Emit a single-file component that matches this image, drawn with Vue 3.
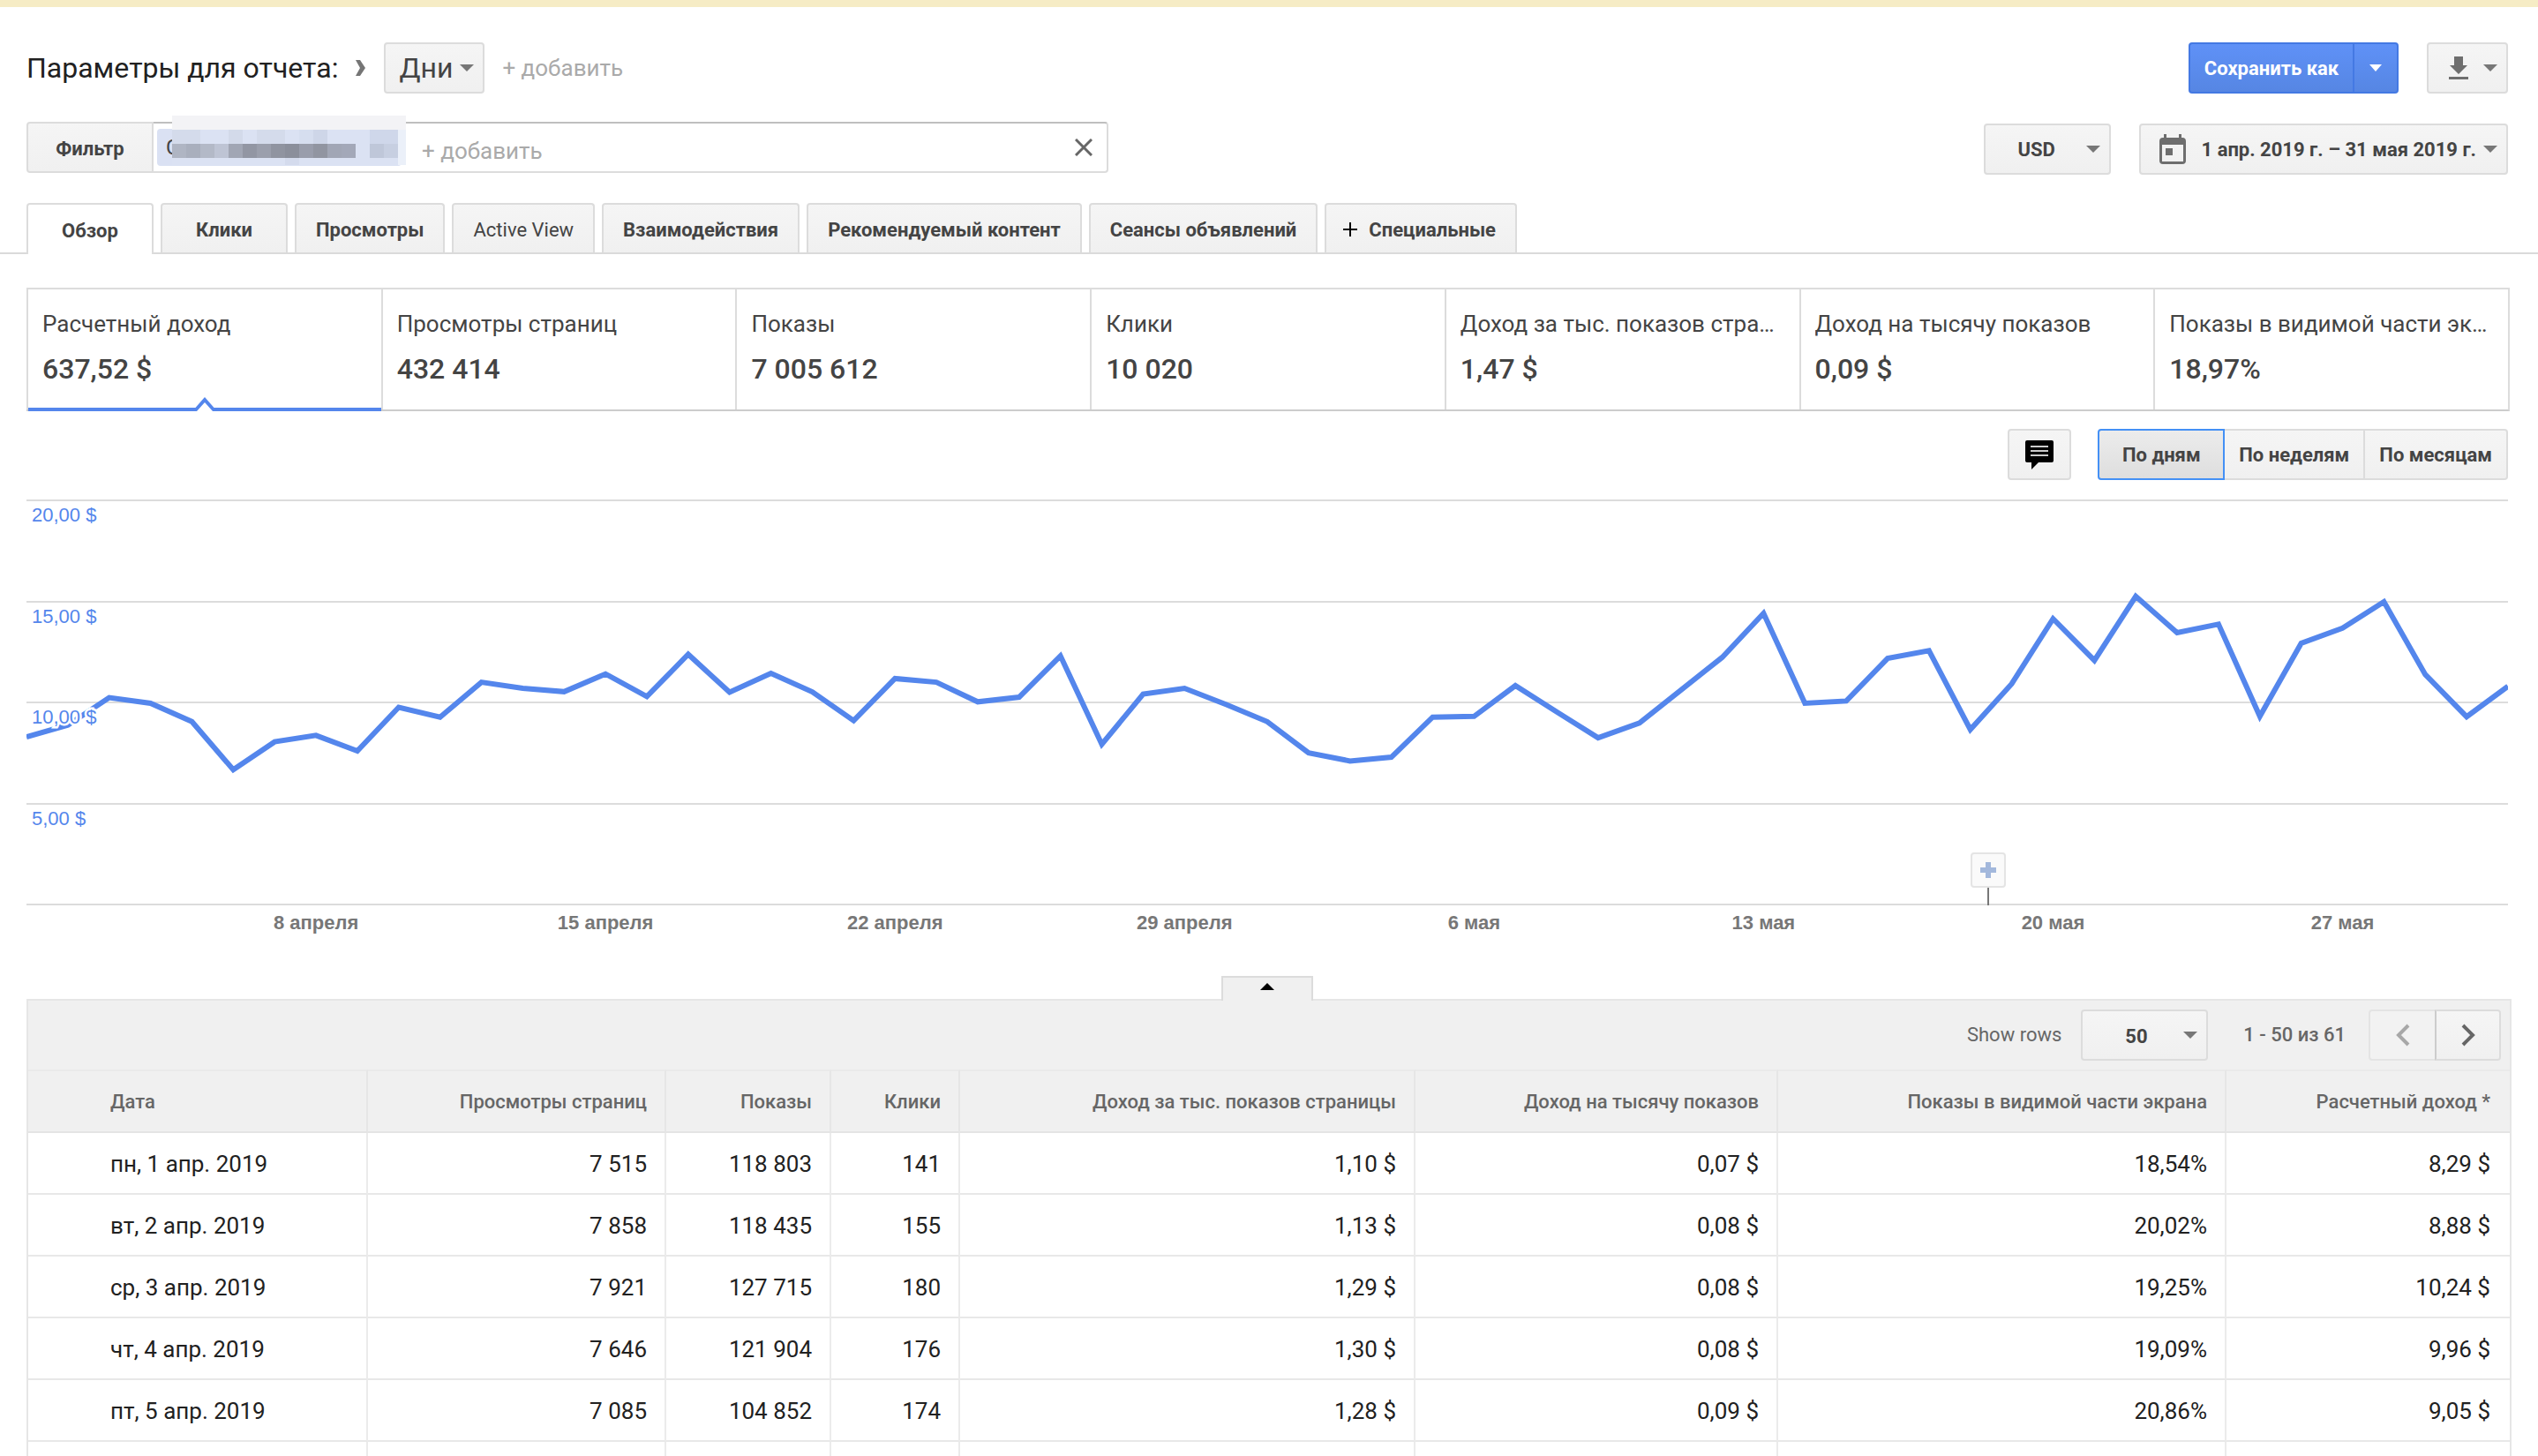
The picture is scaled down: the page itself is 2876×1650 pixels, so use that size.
<script setup>
import { ref, computed } from 'vue'

const tabs = [
  { label: 'Обзор' },
  { label: 'Клики' },
  { label: 'Просмотры' },
  { label: 'Active View', plain: true },
  { label: 'Взаимодействия' },
  { label: 'Рекомендуемый контент' },
  { label: 'Сеансы объявлений' },
  { label: 'Специальные', plus: true }
]
const activeTab = ref('Обзор')

const metrics = [
  { label: 'Расчетный доход', value: '637,52 $' },
  { label: 'Просмотры страниц', value: '432 414' },
  { label: 'Показы', value: '7 005 612' },
  { label: 'Клики', value: '10 020' },
  { label: 'Доход за тыс. показов страницы', value: '1,47 $' },
  { label: 'Доход на тысячу показов', value: '0,09 $' },
  { label: 'Показы в видимой части экрана', value: '18,97%' }
]
const activeMetric = ref('Расчетный доход')

const periods = ['По дням', 'По неделям', 'По месяцам']
const activePeriod = ref('По дням')

// estimated earnings per day, April 1 - May 31
const earnings = [
  8.29, 8.88, 10.24, 9.96, 9.05, 6.67, 8.05, 8.37, 7.6, 9.76,
  9.27, 11, 10.7, 10.53, 11.41, 10.29, 12.38, 10.5, 11.44, 10.52,
  9.1, 11.18, 11, 10.03, 10.26, 12.3, 7.93, 10.41, 10.7, 9.9,
  9.05, 7.5, 7.1, 7.29, 9.27, 9.31, 10.83, 9.53, 8.25, 8.98,
  10.61, 12.23, 14.41, 9.96, 10.07, 12.18, 12.56, 8.66, 10.92, 14.14,
  12.08, 15.25, 13.45, 13.87, 9.31, 12.93, 13.68, 14.98, 11.38, 9.29, 10.8
]
const linePoints = computed(() => earnings.map((v, i) => `${i},${(20 - v).toFixed(2)}`).join(' '))

const yLabels = ['20,00 $', '15,00 $', '10,00 $', '5,00 $']
const xLabels = ['8 апреля', '15 апреля', '22 апреля', '29 апреля', '6 мая', '13 мая', '20 мая', '27 мая']
const dayLeft = (day) => ({ left: (day / 60) * 100 + '%' })

const columns = [
  'Дата', 'Просмотры страниц', 'Показы', 'Клики', 'Доход за тыс. показов страницы',
  'Доход на тысячу показов', 'Показы в видимой части экрана', 'Расчетный доход *'
]
const rows = [
  ['пн, 1 апр. 2019', '7 515', '118 803', '141', '1,10 $', '0,07 $', '18,54%', '8,29 $'],
  ['вт, 2 апр. 2019', '7 858', '118 435', '155', '1,13 $', '0,08 $', '20,02%', '8,88 $'],
  ['ср, 3 апр. 2019', '7 921', '127 715', '180', '1,29 $', '0,08 $', '19,25%', '10,24 $'],
  ['чт, 4 апр. 2019', '7 646', '121 904', '176', '1,30 $', '0,08 $', '19,09%', '9,96 $'],
  ['пт, 5 апр. 2019', '7 085', '104 852', '174', '1,28 $', '0,09 $', '20,86%', '9,05 $']
]

// pixelated site name: one colour per 16px cell
const maskTop = ['#d4dbeb', '#d4dbeb', '#dbe2f3', '#dbe2f3', '#d3daea', '#dbe2f3', '#d4dbeb', '#d4dbeb', '#dbe2f3', '#d6deef', '#ced6e8', '#dbe2f3', '#dbe2f3', '#dbe2f3', '#cfd7ea', '#cfd7ea']
const maskMid = ['#afb5c3', '#a9afbd', '#b3b9c7', '#bec4d4', '#a1a6b4', '#9296a3', '#9b9fac', '#9094a0', '#8b8f9b', '#999dab', '#9195a1', '#a1a6b5', '#a3a8b8', '#dbe2f3', '#bfc7d9', '#c7cfe1']
</script>

<template>
  <div class="report">
    <div class="notice-bar"></div>

    <header class="head">
      <div class="row">
        <div class="params">
          <label class="title" for="dimension">Параметры для отчета:</label>
          <svg class="crumb" width="12" height="20" viewBox="0 0 12 20"><path d="M0 1h5l6 9-6 9H0l5-9z" fill="#757575" /></svg>
          <div class="select dimension">
            <select id="dimension"><option>Дни</option></select>
            <svg class="caret" width="16" height="8" viewBox="0 0 16 8"><path d="M0 0h16L8 8z" /></svg>
          </div>
          <button class="add">+ добавить</button>
        </div>
        <div class="actions">
          <div class="save">
            <button class="save-main">Сохранить как</button>
            <button class="save-more" aria-label="Другие варианты">
              <svg width="14" height="8" viewBox="0 0 14 8"><path d="M0 0h14L7 8z" fill="#fff" /></svg>
            </button>
          </div>
          <button class="btn download" aria-label="Скачать">
            <svg width="22" height="26" viewBox="0 0 22 26"><path d="M6 0h10v10h5L11 20 1 10h5zM0 23h22v3H0z" fill="#6e6e6e" /></svg>
            <svg class="caret" width="16" height="8" viewBox="0 0 16 8"><path d="M0 0h16L8 8z" /></svg>
          </button>
        </div>
      </div>

      <div class="row second">
        <div class="filter">
          <label class="filter-label" for="filter">Фильтр</label>
          <div class="filter-box">
            <span class="chip">С
              <svg class="mask" width="265" height="56" viewBox="0 0 265 56" shape-rendering="crispEdges">
                <rect width="265" height="16" fill="#f3f3f6" />
                <rect y="16" width="256" height="40" fill="#dbe2f3" />
                <rect x="256" y="16" width="9" height="40" fill="#ebf0f9" />
                <rect v-for="(c, i) in maskTop" :key="'t' + i" :x="i * 16" y="16" width="16" height="16" :fill="c" />
                <rect v-for="(c, i) in maskMid" :key="'m' + i" :x="i * 16" y="32" width="16" height="16" :fill="c" />
                <rect x="128" y="48" width="16" height="8" fill="#d4dbed" />
              </svg>
            </span>
            <input id="filter" type="text" placeholder="+ добавить" />
            <button class="clear" aria-label="Очистить">
              <svg width="20" height="20" viewBox="0 0 20 20"><path d="M1 1l18 18M19 1L1 19" stroke="#666" stroke-width="3" /></svg>
            </button>
          </div>
        </div>
        <div class="actions">
          <div class="select currency">
            <select aria-label="Валюта"><option>USD</option></select>
            <svg class="caret" width="16" height="8" viewBox="0 0 16 8"><path d="M0 0h16L8 8z" /></svg>
          </div>
          <button class="btn dates">
            <svg width="30" height="34" viewBox="0 0 30 34">
              <path fill-rule="evenodd" fill="#6e6e6e" d="M5 0h3v4h14V0h3v4h1q4 0 4 4v22q0 4-4 4H4q-4 0-4-4V8q0-4 4-4h1zM3 12v19h24V12zM7 16h8v8H7z" />
            </svg>
            <span>1 апр. 2019 г. – 31 мая 2019 г.</span>
            <svg class="caret" width="16" height="8" viewBox="0 0 16 8"><path d="M0 0h16L8 8z" /></svg>
          </button>
        </div>
      </div>
    </header>

    <nav class="tabs">
      <button
        v-for="tab in tabs" :key="tab.label" class="tab"
        :class="{ active: activeTab === tab.label, plain: tab.plain, plus: tab.plus }"
        @click="activeTab = tab.label"
      >
        <svg v-if="tab.plus" width="18" height="18" viewBox="0 0 18 18"><path d="M9 1v16M1 9h16" stroke="#000" stroke-width="2" /></svg>
        {{ tab.label }}
      </button>
    </nav>

    <section class="metrics">
      <button
        v-for="m in metrics" :key="m.label" class="metric"
        :class="{ active: activeMetric === m.label }" @click="activeMetric = m.label"
      >
        <span class="metric-label">{{ m.label }}</span>
        <span class="metric-value">{{ m.value }}</span>
        <svg v-if="activeMetric === m.label" class="notch" width="28" height="16" viewBox="0 0 28 16">
          <path d="M0 16L14 0l14 16z" fill="#5486ec" /><path d="M5 16l9-10 9 10z" fill="#fff" />
        </svg>
      </button>
    </section>

    <div class="chart-tools">
      <button class="btn note" aria-label="Примечания">
        <svg width="34" height="34" viewBox="0 0 34 34">
          <path d="M3 1h28q2 0 2 2v21q0 2-2 2H16l-8 8v-8H3q-2 0-2-2V3q0-2 2-2z" fill="#000" />
          <path d="M7 8h20M7 13h20M7 18h20" stroke="#ccc" stroke-width="2" />
        </svg>
      </button>
      <div class="segments">
        <button
          v-for="p in periods" :key="p" class="segment"
          :class="{ active: activePeriod === p }" @click="activePeriod = p"
        >{{ p }}</button>
      </div>
    </div>

    <section class="chart">
      <div class="plot">
        <svg class="line" viewBox="0 0 60 20" preserveAspectRatio="none">
          <polyline :points="linePoints" vector-effect="non-scaling-stroke" />
        </svg>
        <div v-for="y in yLabels" :key="y" class="band"><span>{{ y }}</span></div>
        <div class="marker" :style="dayLeft(47.43)">
          <button aria-label="Добавить примечание">
            <svg width="18" height="18" viewBox="0 0 18 18"><path d="M6 0h6v6h6v6h-6v6H6v-6H0V6h6z" fill="#a3b8dc" /></svg>
          </button>
        </div>
      </div>
      <div class="x-axis">
        <span v-for="(x, i) in xLabels" :key="x" :style="dayLeft(7 + i * 7)">{{ x }}</span>
      </div>
    </section>

    <section class="data">
      <button class="collapse" aria-label="Свернуть график">
        <svg width="16" height="8" viewBox="0 0 16 8"><path d="M8 0l8 8H0z" /></svg>
      </button>
      <div class="pager">
        <label for="rows">Show rows</label>
        <div class="select page-size">
          <select id="rows"><option>50</option></select>
          <svg class="caret" width="16" height="8" viewBox="0 0 16 8"><path d="M0 0h16L8 8z" /></svg>
        </div>
        <span class="range">1 - 50 из 61</span>
        <div class="pages">
          <button class="btn prev" aria-label="Назад" disabled>
            <svg width="18" height="26" viewBox="0 0 18 26"><path d="M15 2L4 13l11 11" fill="none" stroke="#a8a8a8" stroke-width="4" /></svg>
          </button>
          <button class="btn next" aria-label="Вперед">
            <svg width="18" height="26" viewBox="0 0 18 26"><path d="M3 2l11 11L3 24" fill="none" stroke="#666" stroke-width="4" /></svg>
          </button>
        </div>
      </div>
      <table>
        <colgroup>
          <col class="c-date" /><col class="c-views" /><col class="c-shows" /><col class="c-clicks" />
          <col class="c-rpm" /><col class="c-cpm" /><col class="c-visible" /><col class="c-income" />
        </colgroup>
        <thead>
          <tr><th v-for="c in columns" :key="c" scope="col">{{ c }}</th></tr>
        </thead>
        <tbody>
          <tr v-for="r in rows" :key="r[0]"><td v-for="(cell, i) in r" :key="i">{{ cell }}</td></tr>
          <tr><td v-for="c in columns" :key="c"></td></tr>
        </tbody>
      </table>
    </section>
  </div>
</template>

<style>
body { margin: 0; background: #fff; }
</style>

<style scoped>
* { box-sizing: border-box; }
.report {
    height: 100vh; overflow: hidden;
    font-family: Roboto, 'Liberation Sans', sans-serif; font-size: 22px; color: #444;
}
button, select, input { font: inherit; color: inherit; margin: 0; padding: 0; border: 0; background: none; }
button { cursor: pointer; white-space: nowrap; }
svg { display: block; flex: none; }
.caret { fill: #777; }

.notice-bar { height: 8px; background: #f6ecc5; }

.head { padding: 40px 34px 32px 30px; }
.row { display: flex; justify-content: space-between; }
.second { margin-top: 32px; height: 60px; align-items: flex-start; }
.params, .actions { display: flex; align-items: center; }
.second .actions { align-self: flex-end; }
.title { font-size: 32px; color: #212121; }
.crumb { margin: 0 20px; }
.add { font-size: 26px; color: #aaa; margin-left: 20px; }

.btn, .select {
    display: flex; align-items: center; height: 58px;
    border: 2px solid #dcdcdc; border-radius: 4px;
    background: linear-gradient(#f5f5f5, #f0f0f0);
}
.select { position: relative; font-weight: 700; }
.select select { width: 100%; height: 100%; appearance: none; outline: none; cursor: pointer; }
.select .caret { position: absolute; right: 10px; pointer-events: none; }
.dimension { width: 114px; font-size: 32px; font-weight: 400; }
.dimension select { padding-left: 15px; }
.currency { width: 144px; }
.currency select { padding-left: 37px; }

.save { display: flex; height: 58px; margin-right: 32px; font-weight: 700; color: #fff; }
.save button { border: 2px solid #4479e3; background: linear-gradient(#5f91f7, #5686e3); }
.save .save-main { width: 186px; border-radius: 4px 0 0 4px; border-right: 0; }
.save .save-more { width: 52px; border-radius: 0 4px 4px 0; display: flex; align-items: center; justify-content: center; }
.download { width: 92px; justify-content: space-between; padding: 0 10px 0 23px; }
.dates { margin-left: 32px; padding: 0 10px 0 21px; font-weight: 700; }
.dates span { margin: 0 8px 0 18px; }

.filter { display: flex; height: 58px; width: 1226px; }
.filter-label {
    width: 144px; padding-top: 2px; border: 2px solid #dcdcdc; border-radius: 4px 0 0 4px;
    background: linear-gradient(#f5f5f5, #f0f0f0);
    display: flex; align-items: center; justify-content: center; font-weight: 700;
}
.filter-box {
    flex: 1; display: flex; align-items: center; padding: 0 16px 0 4px;
    border: 2px solid #dcdcdc; border-top-color: #bfbfbf; border-left: 0; border-radius: 0 4px 4px 0;
}
.chip {
    position: relative; width: 277px; height: 42px; padding-left: 10px; border-radius: 4px;
    background: #dae1f3; font-size: 24px; line-height: 42px;
}
.mask { position: absolute; left: 17px; top: -15px; }
.filter-box input { flex: 1; margin-left: 23px; padding-top: 8px; font-size: 26px; outline: none; }
.filter-box input::placeholder { color: #aaa; opacity: 1; }

.tabs { display: flex; gap: 8px; height: 58px; padding-left: 30px; border-bottom: 2px solid #dadada; }
.tab {
    height: 56px; min-width: 144px; padding: 2px 22px 0; font-weight: 700;
    border: 2px solid #dcdcdc; border-bottom: 0; border-radius: 4px 4px 0 0;
    background: linear-gradient(#f5f5f5, #f0f0f0);
}
.tab.active { height: 58px; background: #fff; }
.tab.plain { font-weight: 400; }
.tab.plus { display: flex; align-items: center; gap: 12px; padding-left: 18px; }

.metrics {
    display: grid; grid-template-columns: repeat(7, minmax(0, 1fr));
    margin: 38px 32px 0 30px; height: 140px;
    border: 2px solid #dcdcdc; border-bottom-color: #ccc; border-left: 0;
}
.metric {
    position: relative; display: flex; flex-direction: column; text-align: left;
    padding: 21px 16px 0; border-left: 2px solid #dcdcdc;
}
.metric-label { width: 100%; font-size: 26px; line-height: 36px; overflow: hidden; text-overflow: ellipsis; }
.metric-value { margin-top: 11px; font-size: 32px; line-height: 44px; font-weight: 500; }
.metric.active::after { content: ''; position: absolute; left: 0; right: 0; bottom: -2px; height: 4px; background: #5486ec; }
.notch { position: absolute; left: 50%; margin-left: -14px; bottom: -2px; z-index: 1; }

.chart-tools { display: flex; justify-content: flex-end; gap: 30px; padding: 20px 34px 22px 30px; }
.note { width: 72px; justify-content: center; }
.segments { display: flex; }
.segment {
    height: 58px; padding: 0 16px; font-weight: 700;
    border: 2px solid #dcdcdc; border-left: 0; background: linear-gradient(#f5f5f5, #f0f0f0);
}
.segment:last-child { border-radius: 0 4px 4px 0; }
.segment.active {
    width: 144px; border: 2px solid #4490f5; border-radius: 4px 0 0 4px;
    background: linear-gradient(#ececec, #dedede);
}

.chart { margin: 0 34px 0 30px; }
.plot { position: relative; height: 460px; border-bottom: 2px solid #dcdcdc; display: grid; grid-template-rows: repeat(4, 1fr); }
.band { border-top: 2px solid #dcdcdc; padding: 2px 6px; }
.band span {
    position: relative; font-family: 'Liberation Sans', Arial, sans-serif; font-size: 22px; line-height: 28px; color: #5486ec;
    -webkit-text-stroke: 5px #fff; paint-order: stroke;
}
.line { position: absolute; left: 0; top: 1px; width: 100%; height: 458px; overflow: hidden; }
.line polyline { fill: none; stroke: #5486ec; stroke-width: 6; stroke-linejoin: miter; }
.marker { position: absolute; bottom: -2px; margin-left: -20px; height: 60px; width: 40px; background: linear-gradient(#777, #777) 50% 100% / 2px 20px no-repeat; }
.marker button {
    width: 40px; height: 40px; display: flex; align-items: center; justify-content: center;
    border: 2px solid #e4e4e4; border-radius: 4px; background: #fafafa;
}
.x-axis { position: relative; height: 80px; font-family: 'Liberation Sans', Arial, sans-serif; font-weight: 700; color: #777; }
.x-axis span { position: absolute; top: 6px; line-height: 28px; transform: translateX(-50%); white-space: nowrap; }

.data { margin: 26px 30px 0; position: relative; border: 2px solid #e6e6e6; border-bottom: 0; background: #fff; }
.collapse {
    position: absolute; left: 50%; bottom: 100%; margin-left: -54px;
    width: 104px; height: 28px; display: flex; justify-content: center; padding-top: 6px;
    border: 2px solid #dcdcdc; border-bottom: 0; background: #f0f0f0;
}
.pager { height: 78px; display: flex; align-items: flex-start; justify-content: flex-end; padding: 10px 10px 0; line-height: 58px; background: #f0f0f0; color: #666; }
.page-size { width: 144px; margin: 0 40px 0 22px; color: #444; }
.page-size select { padding-left: 48px; }
.range { font-weight: 500; margin-right: 26px; }
.pages { display: flex; }
.pages .btn { width: 75px; justify-content: center; }
.pages .prev { border-color: #e4e4e4; border-right: 0; border-radius: 4px 0 0 4px; background: #f2f2f2; }
.pages .next { border-radius: 0 4px 4px 0; border-left-color: #ccc; }

table { width: 100%; table-layout: fixed; border-collapse: separate; border-spacing: 0; }
.c-date { width: 385px; }
.c-views { width: 338px; }
.c-shows { width: 187px; }
.c-clicks { width: 146px; }
.c-rpm { width: 516px; }
.c-cpm { width: 411px; }
.c-visible { width: 508px; }
th, td { height: 70px; padding: 0 20px; text-align: right; border-right: 2px solid #ebebeb; border-bottom: 2px solid #e8e8e8; white-space: nowrap; }
th { height: 72px; background: #f0f0f0; border-top: 2px solid #eaeaea; border-right-color: #e6e6e6; border-bottom-color: #e4e4e4; font-weight: 500; color: #666; }
td { padding-top: 2px; font-size: 26px; color: #212121; }
th:first-child, td:first-child { padding-left: 93px; text-align: left; }
th:last-child, td:last-child { border-right: 0; padding-right: 22px; }
</style>
